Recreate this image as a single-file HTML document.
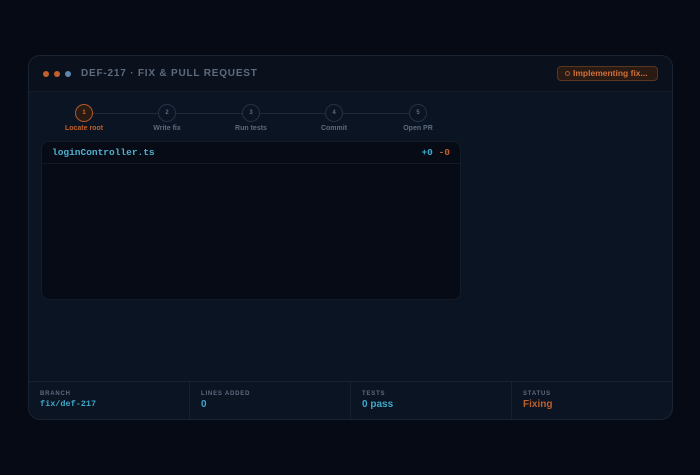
<!DOCTYPE html>
<html><head><style>
*{box-sizing:border-box;margin:0;padding:0}
body{width:700px;height:475px;background:#050a15;font-family:"Liberation Sans",sans-serif;position:relative;overflow:hidden}
.card{position:absolute;left:28px;top:55px;width:645px;height:365px;border:1px solid #1b2433;border-radius:12px;background:#0a1423;overflow:hidden}
.hdr{height:36px;background:#0b111c;border-bottom:1px solid #141c28;position:relative}
.dot{position:absolute;top:15px;width:6px;height:6px;border-radius:50%}
.title{position:absolute;left:52px;top:12px;font-size:10px;font-weight:bold;color:#5d6b7e;letter-spacing:0.8px}
.badge{position:absolute;right:14px;top:10px;height:15px;width:101px;border:1px solid #5a3520;background:#2a1a14;border-radius:4px;color:#d0703a;font-size:8.5px;font-weight:bold;line-height:13px;padding-left:15px}
.badge:before{content:"";position:absolute;left:7px;top:4px;width:3px;height:3px;border:1px solid #a05a30;border-radius:50%}
.line{position:absolute;left:55px;top:57px;width:334px;height:1px;background:#1e2a3a}
.step{position:absolute;top:48px;width:80px;text-align:center;margin-left:-40px}
.c{width:18px;height:18px;border-radius:50%;border:1px solid #253244;background:#0a1423;margin:0 auto;font-size:6px;color:#5d6b7e;line-height:16px;font-weight:bold}
.l{font-size:7px;color:#5d6b7e;margin-top:3px;font-weight:bold}
.act .c{border:1.5px solid #b0582a;color:#c0703a;background:#2a1a14}
.act .l{color:#c0602a}
.code{position:absolute;left:12px;top:85px;width:420px;height:159px;background:#060b15;border:1px solid #141c28;border-radius:8px}
.fh{height:22px;border-bottom:1px solid #121a26;position:relative;font-family:"Liberation Mono",monospace;font-size:9.5px;font-weight:bold;line-height:22px}
.foot{position:absolute;left:0;bottom:0;width:100%;height:38px;border-top:1px solid #17202e;display:flex}
.f{flex:1;border-right:1px solid #17202e;padding:9px 11px}
.f:last-child{border-right:none}
.fl{font-size:6px;color:#5d6b7e;letter-spacing:0.8px;font-weight:bold}
.fv{font-size:10px;color:#3fa9c9;margin-top:2px;font-weight:bold}
</style></head><body>
<div class="card">
<div class="hdr">
<div class="dot" style="left:14px;background:#c0602a"></div>
<div class="dot" style="left:25px;background:#c0602a"></div>
<div class="dot" style="left:36px;background:#5a88b0"></div>
<div class="title">DEF-217 · FIX &amp; PULL REQUEST</div>
<div class="badge">Implementing fix...</div>
</div>
<div class="line"></div>
<div class="step act" style="left:55px"><div class="c">1</div><div class="l">Locate root</div></div>
<div class="step" style="left:138px"><div class="c">2</div><div class="l">Write fix</div></div>
<div class="step" style="left:222px"><div class="c">3</div><div class="l">Run tests</div></div>
<div class="step" style="left:305px"><div class="c">4</div><div class="l">Commit</div></div>
<div class="step" style="left:389px"><div class="c">5</div><div class="l">Open PR</div></div>
<div class="code"><div class="fh"><span style="position:absolute;left:10px;color:#4fb0d0">loginController.ts</span><span style="position:absolute;right:10px"><span style="color:#3fa9c9">+0</span> <span style="color:#c0602a">-0</span></span></div></div>
<div class="foot">
<div class="f"><div class="fl">BRANCH</div><div class="fv" style="font-family:'Liberation Mono',monospace;font-size:8.5px;font-weight:bold">fix/def-217</div></div>
<div class="f"><div class="fl">LINES ADDED</div><div class="fv">0</div></div>
<div class="f"><div class="fl">TESTS</div><div class="fv">0 pass</div></div>
<div class="f"><div class="fl">STATUS</div><div class="fv" style="color:#c0602a">Fixing</div></div>
</div>
</div>
</body></html>
